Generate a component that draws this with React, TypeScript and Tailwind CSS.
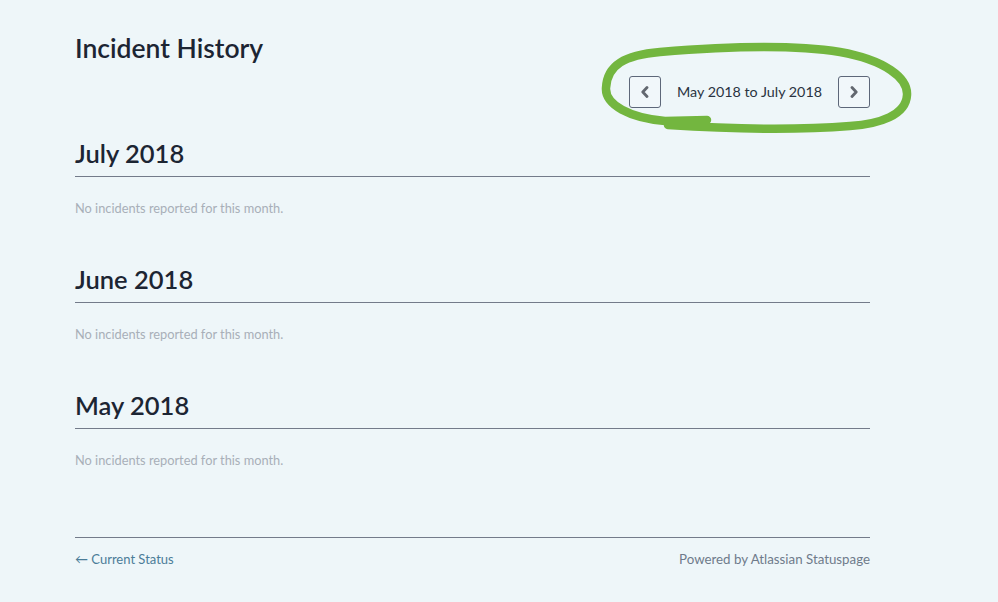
const months = ["July 2018", "June 2018", "May 2018"]

const Chevron = ({ dir }: { dir: "left" | "right" }) => (
    <svg width="10" height="12" viewBox="0 0 10 12" fill="none">
        <path
            d={dir === "left" ? "M7 1.5 L2.8 6 L7 10.5" : "M3 1.5 L7.2 6 L3 10.5"}
            stroke="#62676f"
            strokeWidth="2.8"
            strokeLinecap="round"
            strokeLinejoin="round"
        />
    </svg>
)

const NavButton = ({ dir }: { dir: "left" | "right" }) => (
    <button className="flex h-[32px] w-[32px] items-center justify-center rounded-[3px] border border-[#5d6779] bg-[#f1f7fa]">
        <Chevron dir={dir} />
    </button>
)

export default function App() {
    return (
        <div
            className="relative h-[602px] w-[998px] overflow-hidden bg-[#eef6f9]"
            style={{ fontFamily: "Lato, 'Open Sans', sans-serif" }}
        >
            <div className="ml-[75px] w-[795px] pt-[32px]">
                {/* header */}
                <div className="flex items-start justify-between">
                    <h1 className="text-[26.5px] leading-[32px] font-semibold text-[#1c2533]">Incident History</h1>
                    <div className="mt-[44px] flex items-center gap-4">
                        <NavButton dir="left" />
                        <span className="text-[14.3px] text-[#2a3341]">May 2018 to July 2018</span>
                        <NavButton dir="right" />
                    </div>
                </div>

                {/* months */}
                <div className="mt-[29px] flex flex-col gap-[47px]">
                    {months.map((m) => (
                        <div key={m}>
                            <h2 className="border-b border-[#737b8a] pb-[7px] text-[25.5px] leading-[32px] font-semibold text-[#1c2533]">
                                {m}
                            </h2>
                            <p className="mt-[23px] text-[12.8px] leading-[16px] text-[#a8afb8]">
                                No incidents reported for this month.
                            </p>
                        </div>
                    ))}
                </div>

                {/* footer */}
                <div className="mt-[69px] flex items-center justify-between border-t border-[#737b8a] pt-[12px] text-[13px] leading-[18px]">
                    <a className="text-[#4b7c98]">← Current Status</a>
                    <span className="text-[13.3px] text-[#6f7b8b]">Powered by Atlassian Statuspage</span>
                </div>
            </div>

            {/* hand-drawn annotation */}
            <svg className="pointer-events-none absolute inset-0" width="998" height="602">
                <path
                    d="M707 120 L665 121 C630 118 605 105 606 88 C607 65 625 55 660 52 C720 47 790 44 840 52 C885 60 908 78 907 95 C906 115 880 124 850 126 C800 130 730 129 668 125"
                    fill="none"
                    stroke="#73b63f"
                    strokeWidth="8.5"
                    strokeLinecap="round"
                    strokeLinejoin="round"
                />
            </svg>
        </div>
    )
}
